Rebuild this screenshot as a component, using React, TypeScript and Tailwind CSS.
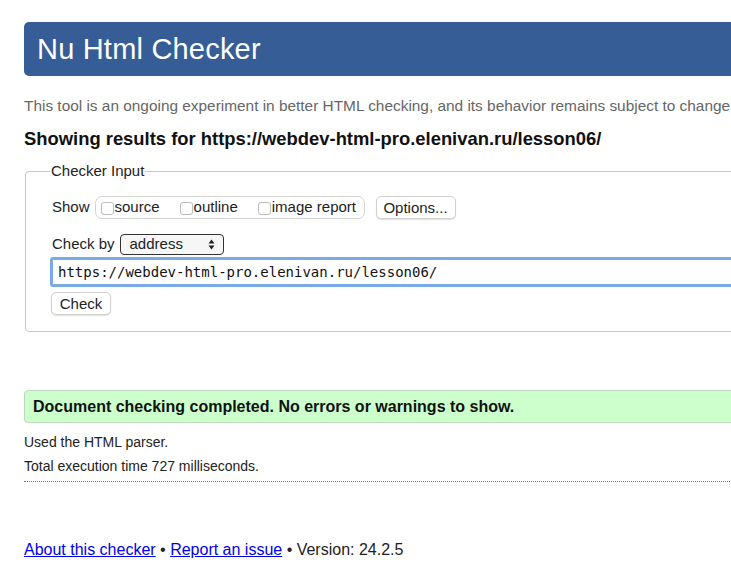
import React from "react";

export default function App() {
  return (
    <div className="w-[731px] h-[576px] overflow-hidden bg-white" style={{ fontFamily: '"Liberation Sans", Arial, sans-serif' }}>
      <div className="w-[1100px] pl-[24px] pt-[22px]">
        <div className="h-[54px] bg-[#365d95] rounded-[5px] flex items-center pl-[13px]">
          <h1 className="text-white text-[29px] leading-none tracking-[0.2px]">Nu Html Checker</h1>
        </div>
        <p className="mt-[21px] text-[15.4px] text-[#666] leading-[18px] whitespace-nowrap">
          This tool is an ongoing experiment in better HTML checking, and its behavior remains subject to change
        </p>
        <h2 className="mt-[13px] text-[18.4px] font-bold text-[#111] leading-[22px]">
          Showing results for https://webdev-html-pro.elenivan.ru/lesson06/
        </h2>
        <fieldset className="mt-[13px] ml-[1px] border border-[#c8c8c8] rounded-[4px] pl-[26px] pr-4 pb-[15px] pt-[16px]">
          <legend className="px-[1px] ml-[-2px] text-[15px] text-[#222] leading-[16px]">Checker Input</legend>
          <div className="flex items-center h-[24px] text-[15px] text-[#222]">
            <span>Show</span>
            <div className="ml-[5px] h-[23px] w-[270px] border border-[#d4d4d4] rounded-[7px] flex items-center pl-[5px]">
              <label className="flex items-center">
                <span className="w-[13px] h-[13px] border border-[#bcbcbc] rounded-[3px] bg-white mt-[3px]"></span>
                <span className="ml-[1px]">source</span>
              </label>
              <label className="flex items-center ml-[20px]">
                <span className="w-[13px] h-[13px] border border-[#bcbcbc] rounded-[3px] bg-white mt-[3px]"></span>
                <span className="ml-[1px]">outline</span>
              </label>
              <label className="flex items-center ml-[20px]">
                <span className="w-[13px] h-[13px] border border-[#bcbcbc] rounded-[3px] bg-white mt-[3px]"></span>
                <span className="ml-[1px]">image report</span>
              </label>
            </div>
            <button className="ml-[11px] h-[23px] w-[80px] border border-[#d0d0d0] rounded-[5px] bg-white shadow-[0_1px_1px_rgba(0,0,0,0.12)] text-[15px] text-[#222]">
              Options...
            </button>
          </div>
          <div className="mt-[14px] flex items-center h-[22px] text-[15px] text-[#222]">
            <span>Check by</span>
            <div className="ml-[5px] h-[21px] w-[104px] border border-[#333] rounded-[4px] bg-[#f6f6f6] flex items-center justify-between pl-[9px] pr-[8px]">
              <span>address</span>
              <svg width="7" height="11" viewBox="0 0 7 11">
                <path d="M3.5 0.5 L6.5 4.5 L0.5 4.5 Z" fill="#222" />
                <path d="M3.5 10.5 L6.5 6.5 L0.5 6.5 Z" fill="#222" />
              </svg>
            </div>
          </div>
          <div className="mt-[2px] ml-[-2px] h-[30px] border-[3px] border-[#7aa9e8] rounded-[3px] flex items-center pl-[5px]">
            <span className="text-[14px] text-[#111]" style={{ fontFamily: '"DejaVu Sans Mono", monospace' }}>
              https://webdev-html-pro.elenivan.ru/lesson06/
            </span>
          </div>
          <button className="mt-[5px] ml-[-1px] h-[23px] w-[60px] border border-[#d0d0d0] rounded-[5px] bg-white shadow-[0_1px_1px_rgba(0,0,0,0.12)] text-[15px] text-[#222]">
            Check
          </button>
        </fieldset>
        <div className="mt-[58px] h-[33px] bg-[#ccffcc] border border-[#bcd9bc] rounded-[4px] flex items-center pl-[8px]">
          <span className="text-[16px] font-bold text-[#111]">Document checking completed. No errors or warnings to show.</span>
        </div>
        <p className="mt-[11px] text-[14px] text-[#222] leading-[16px]">Used the HTML parser.</p>
        <p className="mt-[8px] text-[14px] text-[#222] leading-[16px]">Total execution time 727 milliseconds.</p>
        <div className="mt-[7px] border-t border-dotted border-[#777]"></div>
        <p className="mt-[59px] text-[16px] text-[#222] leading-[18px]">
          <a className="text-[#0000ee] underline" href="#">About this checker</a>
          {" • "}
          <a className="text-[#0000ee] underline" href="#">Report an issue</a>
          {" • Version: 24.2.5"}
        </p>
      </div>
    </div>
  );
}
